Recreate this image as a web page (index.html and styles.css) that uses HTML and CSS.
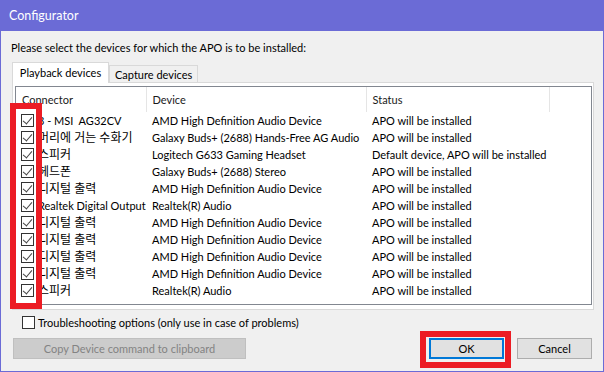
FILE: index.html
```html
<!DOCTYPE html>
<html>
<head>
<meta charset="utf-8">
<link rel="stylesheet" href="styles.css">
</head>
<body>
<div class="window">
  <div class="titlebar">Configurator</div>
  <div class="content">
    <p class="prompt">Please select the devices for which the APO is to be installed:</p>
    <div class="tabs">
      <div class="tab active">Playback devices</div>
      <div class="tab">Capture devices</div>
    </div>
    <div class="panel">
      <div class="listview">
        <table class="grid">
          <colgroup>
            <col class="c-conn"><col class="c-dev"><col class="c-stat"><col class="c-rest">
          </colgroup>
          <thead>
            <tr><th>Connector</th><th>Device</th><th>Status</th><th class="last"></th></tr>
          </thead>
          <tbody>
            <tr><td class="conn"><span class="cb on"></span><span class="name">3 - MSI&nbsp; AG32CV</span></td><td>AMD High Definition Audio Device</td><td>APO will be installed</td><td></td></tr>
            <tr><td class="conn"><span class="cb on"></span><span class="name ko" lang="ko">머리에 거는 수화기</span></td><td>Galaxy Buds+ (2688) Hands-Free AG Audio</td><td>APO will be installed</td><td></td></tr>
            <tr><td class="conn"><span class="cb on"></span><span class="name ko" lang="ko">스피커</span></td><td>Logitech G633 Gaming Headset</td><td>Default device, APO will be installed</td><td></td></tr>
            <tr><td class="conn"><span class="cb on"></span><span class="name ko" lang="ko">헤드폰</span></td><td>Galaxy Buds+ (2688) Stereo</td><td>APO will be installed</td><td></td></tr>
            <tr><td class="conn"><span class="cb on"></span><span class="name ko" lang="ko">디지털 출력</span></td><td>AMD High Definition Audio Device</td><td>APO will be installed</td><td></td></tr>
            <tr><td class="conn"><span class="cb on"></span><span class="name">Realtek Digital Output</span></td><td>Realtek(R) Audio</td><td>APO will be installed</td><td></td></tr>
            <tr><td class="conn"><span class="cb on"></span><span class="name ko" lang="ko">디지털 출력</span></td><td>AMD High Definition Audio Device</td><td>APO will be installed</td><td></td></tr>
            <tr><td class="conn"><span class="cb on"></span><span class="name ko" lang="ko">디지털 출력</span></td><td>AMD High Definition Audio Device</td><td>APO will be installed</td><td></td></tr>
            <tr><td class="conn"><span class="cb on"></span><span class="name ko" lang="ko">디지털 출력</span></td><td>AMD High Definition Audio Device</td><td>APO will be installed</td><td></td></tr>
            <tr><td class="conn"><span class="cb on"></span><span class="name ko" lang="ko">디지털 출력</span></td><td>AMD High Definition Audio Device</td><td>APO will be installed</td><td></td></tr>
            <tr><td class="conn"><span class="cb on"></span><span class="name ko" lang="ko">스피커</span></td><td>Realtek(R) Audio</td><td>APO will be installed</td><td></td></tr>
          </tbody>
        </table>
      </div>
    </div>
    <div class="trouble"><span class="cb"></span><span>Troubleshooting options (only use in case of problems)</span></div>
    <div class="buttons">
      <button class="btn copy" disabled>Copy Device command to clipboard</button>
      <button class="btn ok">OK</button>
      <button class="btn cancel">Cancel</button>
    </div>
  </div>
  <div class="mark mark-list"></div>
  <div class="mark mark-ok"></div>
</div>
</body>
</html>
```
FILE: styles.css
```css
* { box-sizing: border-box; }
html, body { margin: 0; padding: 0; background: #f0f0f0; }
body {
  font-family: Lato, "Noto Sans CJK KR", sans-serif;
  font-size: 11px;
  color: #000;
}
.window {
  position: relative;
  width: 604px;
  height: 372px;
  border: 1px solid #6b6bd6;
  background: #f0f0f0;
  overflow: hidden;
}
.titlebar {
  background: #6b6bd6;
  color: #fff;
  font-size: 12.5px;
  line-height: 31px;
  padding-left: 9px;
  margin: -1px -1px 0;
  height: 31px;
}
.content {
  padding: 0 9px 0 11px;
}
.prompt {
  margin: 9px 0 0 -1px;
  line-height: 16px;
  height: 16px;
  white-space: nowrap;
}
.tabs {
  display: flex;
  align-items: flex-end;
  margin-top: 6px;
  height: 21px;
  margin-bottom: -1px;
  position: relative;
  z-index: 1;
}
.tab {
  border: 1px solid #d9d9d9;
  border-bottom: none;
  background: #f0f0f0;
  height: 17px;
  line-height: 17px;
  padding: 0 5px 0 5px;
  margin-bottom: 1px;
  white-space: nowrap;
}
.tab.active {
  background: #fff;
  height: 21px;
  line-height: 19px;
  margin-bottom: 0;
  text-align: center;
  padding: 0;
  width: 97px;
}
.panel {
  border: 1px solid #d9d9d9;
  background: #fff;
  padding: 3px 0 4px 2px;
  height: 228px;
}
.listview {
  border: 1px solid #828790;
  background: #fff;
  height: 219px;
  width: 577px;
  overflow: hidden;
}
.grid {
  border-collapse: collapse;
  table-layout: fixed;
  width: 575px;
}
.c-conn { width: 130px; }
.c-dev { width: 220px; }
.c-stat { width: 183px; }
.c-rest { width: 42px; }
.grid th {
  height: 25px;
  padding: 0 0 0 6px;
  text-align: left;
  font-weight: normal;
  color: #1a1a1a;
  border-right: 1px solid #e5e5e5;
  white-space: nowrap;
}
.grid th.last { border-right: none; }
.grid td {
  height: 17px;
  padding: 0 0 0 6px;
  line-height: 17px;
  white-space: nowrap;
  overflow: hidden;
}
.grid td.conn {
  padding-left: 5px;
}
.conn .cb { vertical-align: top; margin-top: 2px; margin-right: 4px; }
.cb {
  display: inline-block;
  width: 13px;
  height: 13px;
  border: 1px solid #333;
  background: #fff;
  position: relative;
}
.cb.on::after {
  content: "";
  position: absolute;
  left: 3px;
  top: 0px;
  width: 4px;
  height: 8px;
  border-right: 1px solid #444;
  border-bottom: 1px solid #444;
  transform: rotate(40deg);
}
.name { display: inline-block; vertical-align: top; }
.name.ko { font-size: 12px; }
.trouble {
  display: flex;
  align-items: center;
  margin-top: 6px;
  margin-left: 10px;
  height: 13px;
  white-space: nowrap;
}
.trouble .cb { margin-right: 3px; flex: none; }
.buttons {
  display: flex;
  margin-top: 9px;
  margin-right: 2px;
  margin-left: 1px;
}
.btn {
  font-family: inherit;
  font-size: 11px;
  height: 21px;
  padding: 0;
  background: #e1e1e1;
  border: 1px solid #adadad;
  color: #000;
}
.btn.copy {
  width: 233px;
  background: #cccccc;
  border-color: #bfbfbf;
  color: #838383;
  margin-right: auto;
}
.btn.ok {
  width: 75px;
  border: 2px solid #0078d7;
  margin-right: 13px;
}
.btn.cancel { width: 75px; }
.mark {
  position: absolute;
  border: 6px solid #ec1c24;
}
.mark-list {
  left: 9px;
  top: 102px;
  width: 32px;
  height: 206px;
}
.mark-ok {
  left: 419px;
  top: 330px;
  width: 91px;
  height: 37px;
}
```
